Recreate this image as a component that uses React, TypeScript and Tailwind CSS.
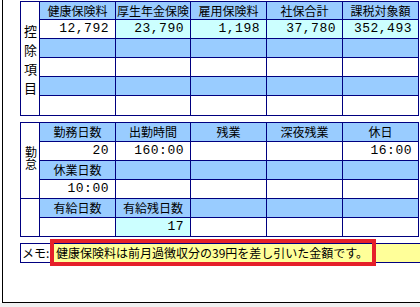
import React from "react";

const JP = { fontFamily: '"Noto Sans CJK JP", "Noto Sans", sans-serif' };
const MONO = { fontFamily: '"Liberation Mono", "DejaVu Sans Mono", monospace' };

type Cell = { t?: string; c: "h" | "w" | "c"; n?: boolean };

const bg = (c: Cell["c"]) =>
  c === "h" ? "bg-[#99ccff]" : c === "c" ? "bg-[#ccffff]" : "bg-white";

function GridCell({ cell }: { cell: Cell }) {
  if (cell.n) {
    return (
      <div
        className={`${bg(cell.c)} flex items-center justify-end pr-[6px] text-[13px] tracking-[0.5px] text-black`}
        style={MONO}
      >
        {cell.t}
      </div>
    );
  }
  return (
    <div
      className={`${bg(cell.c)} flex items-center justify-center text-[12px] leading-none text-black whitespace-nowrap`}
      style={JP}
    >
      {cell.t}
    </div>
  );
}

const t1: Cell[][] = [
  [
    { t: "健康保険料", c: "h" },
    { t: "厚生年金保険", c: "h" },
    { t: "雇用保険料", c: "h" },
    { t: "社保合計", c: "h" },
    { t: "課税対象額", c: "h" },
  ],
  [
    { t: "12,792", c: "w", n: true },
    { t: "23,790", c: "c", n: true },
    { t: "1,198", c: "c", n: true },
    { t: "37,780", c: "c", n: true },
    { t: "352,493", c: "c", n: true },
  ],
  [{ c: "h" }, { c: "h" }, { c: "h" }, { c: "h" }, { c: "h" }],
  [{ c: "w" }, { c: "w" }, { c: "w" }, { c: "w" }, { c: "w" }],
  [{ c: "h" }, { c: "h" }, { c: "h" }, { c: "h" }, { c: "h" }],
  [{ c: "w" }, { c: "w" }, { c: "w" }, { c: "w" }, { c: "w" }],
];

const t2a: Cell[][] = [
  [
    { t: "勤務日数", c: "h" },
    { t: "出勤時間", c: "h" },
    { t: "残業", c: "h" },
    { t: "深夜残業", c: "h" },
    { t: "休日", c: "h" },
  ],
  [
    { t: "20", c: "w", n: true },
    { t: "160:00", c: "w", n: true },
    { c: "w" },
    { c: "w" },
    { t: "16:00", c: "w", n: true },
  ],
  [{ t: "休業日数", c: "h" }, { c: "h" }, { c: "h" }, { c: "h" }, { c: "h" }],
  [{ t: "10:00", c: "w", n: true }, { c: "w" }, { c: "w" }, { c: "w" }, { c: "w" }],
];

const t2b: Cell[][] = [
  [{ t: "有給日数", c: "h" }, { t: "有給残日数", c: "h" }, { c: "h" }, { c: "h" }, { c: "h" }],
  [{ c: "w" }, { t: "17", c: "c", n: true }, { c: "w" }, { c: "w" }, { c: "w" }],
];

export default function App() {
  return (
    <div className="w-[420px] h-[307px] bg-[#f0f0f0] overflow-hidden">
      <div className="w-full h-[303px] bg-white pl-[2px]">
        <div className="h-full border-l border-b border-black pl-[17px] pt-px">
          {/* Table 1 */}
          <div className="grid w-[399px] grid-cols-[18px_75px_74px_75px_75px_75px] grid-rows-[17px_18px_18px_18px_18px_19px] gap-px bg-[#000080] p-px">
            <div
              className="row-span-6 bg-white flex flex-col items-center justify-center text-[13px] leading-[19px] text-black pl-px"
              style={JP}
            >
              <span>控</span>
              <span>除</span>
              <span>項</span>
              <span>目</span>
            </div>
            {t1.flat().map((c, i) => (
              <GridCell key={i} cell={c} />
            ))}
          </div>

          {/* Table 2 */}
          <div className="mt-[6px] grid w-[399px] grid-cols-[18px_75px_74px_75px_75px_75px] grid-rows-[18px_18px_18px_18px_18px_18px] gap-px bg-[#000080] p-px">
            <div
              className="row-span-4 bg-white flex items-center justify-center pb-[6px] pl-px"
            >
              <span
                className="[writing-mode:vertical-rl] text-[12px] leading-[12px] text-black"
                style={JP}
              >
                勤怠
              </span>
            </div>
            {t2a.flat().map((c, i) => (
              <GridCell key={"a" + i} cell={c} />
            ))}
            <div className="row-span-2 bg-white" />
            {t2b.flat().map((c, i) => (
              <GridCell key={"b" + i} cell={c} />
            ))}
          </div>

          {/* Memo */}
          <div className="relative mt-[6px] flex h-[20px] w-[401px]">
            <div
              className="w-[33px] h-full border border-[#000080] bg-white flex items-center pl-[1px] text-[12px] text-black"
              style={JP}
            >
              メモ:
            </div>
            <div
              className="flex-1 h-full border-y border-[#000080] bg-[#ffff99] flex items-center pl-[3px] text-[12px] text-black whitespace-nowrap"
              style={JP}
            >
              健康保険料は前月過徴収分の39円を差し引いた金額です。
              <span className="ml-[4px] inline-block h-[12px] w-px bg-black" />
            </div>
            <div className="absolute left-[30px] top-[-4px] h-[27px] w-[326px] border-[4px] border-[#e5202a]" />
          </div>
        </div>
      </div>
    </div>
  );
}
